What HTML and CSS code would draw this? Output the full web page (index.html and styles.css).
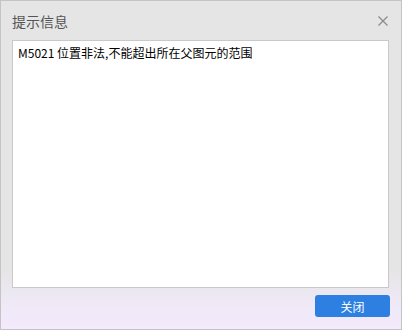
FILE: index.html
```html
<!DOCTYPE html>
<html lang="zh-CN">
<head>
    <meta charset="UTF-8">
    <meta name="viewport" content="width=device-width, initial-scale=1.0">
    <title>提示信息</title>
    <link rel="stylesheet" href="styles.css">
</head>
<body>
    <div class="dialog">
        <div class="dialog-header">
            <span class="dialog-title">提示信息</span>
            <span class="dialog-close">
                <svg width="10" height="10" viewBox="0 0 10 10">
                    <path d="M0.5 0.5 L9.5 9.5 M9.5 0.5 L0.5 9.5" stroke="#8a8a8a" stroke-width="1.2" fill="none"/>
                </svg>
            </span>
        </div>
        <div class="dialog-body">
            <div class="message">M5021 位置非法,不能超出所在父图元的范围</div>
        </div>
        <div class="dialog-footer">
            <button class="close-btn">关闭</button>
        </div>
    </div>
</body>
</html>
```

FILE: styles.css
```css
* {
    margin: 0;
    padding: 0;
    box-sizing: border-box;
}
body {
    font-family: "Microsoft YaHei", "Noto Sans CJK SC", sans-serif;
}
.dialog {
    width: 402px;
    height: 330px;
    border: 1px solid #c4c4c4;
    display: flex;
    flex-direction: column;
    background: linear-gradient(to bottom, #e5e5e5 0%, #e5e5e5 82%, #efe9f7 92%, #f3eafc 100%);
}
.dialog-header {
    height: 39px;
    display: flex;
    align-items: center;
    justify-content: space-between;
    padding: 0 13px 0 11px;
}
.dialog-title {
    font-size: 14px;
    color: #555;
}
.dialog-close {
    display: flex;
    width: 10px;
    height: 10px;
}
.dialog-body {
    padding: 0 12px 0 11px;
}
.message {
    height: 248px;
    background: #fff;
    border: 1px solid #c9c9c9;
    padding: 3px 5px;
    font-size: 12px;
    line-height: 18px;
    color: #000;
}
.dialog-footer {
    flex: 1;
    display: flex;
    justify-content: flex-end;
    align-items: flex-start;
    padding: 7px 11px 0 0;
}
.close-btn {
    width: 75px;
    height: 22px;
    background: #2d80e1;
    border: none;
    border-radius: 3px;
    color: #fff;
    font-family: "Microsoft YaHei", "Noto Sans CJK SC", sans-serif;
    font-size: 12px;
}
```
